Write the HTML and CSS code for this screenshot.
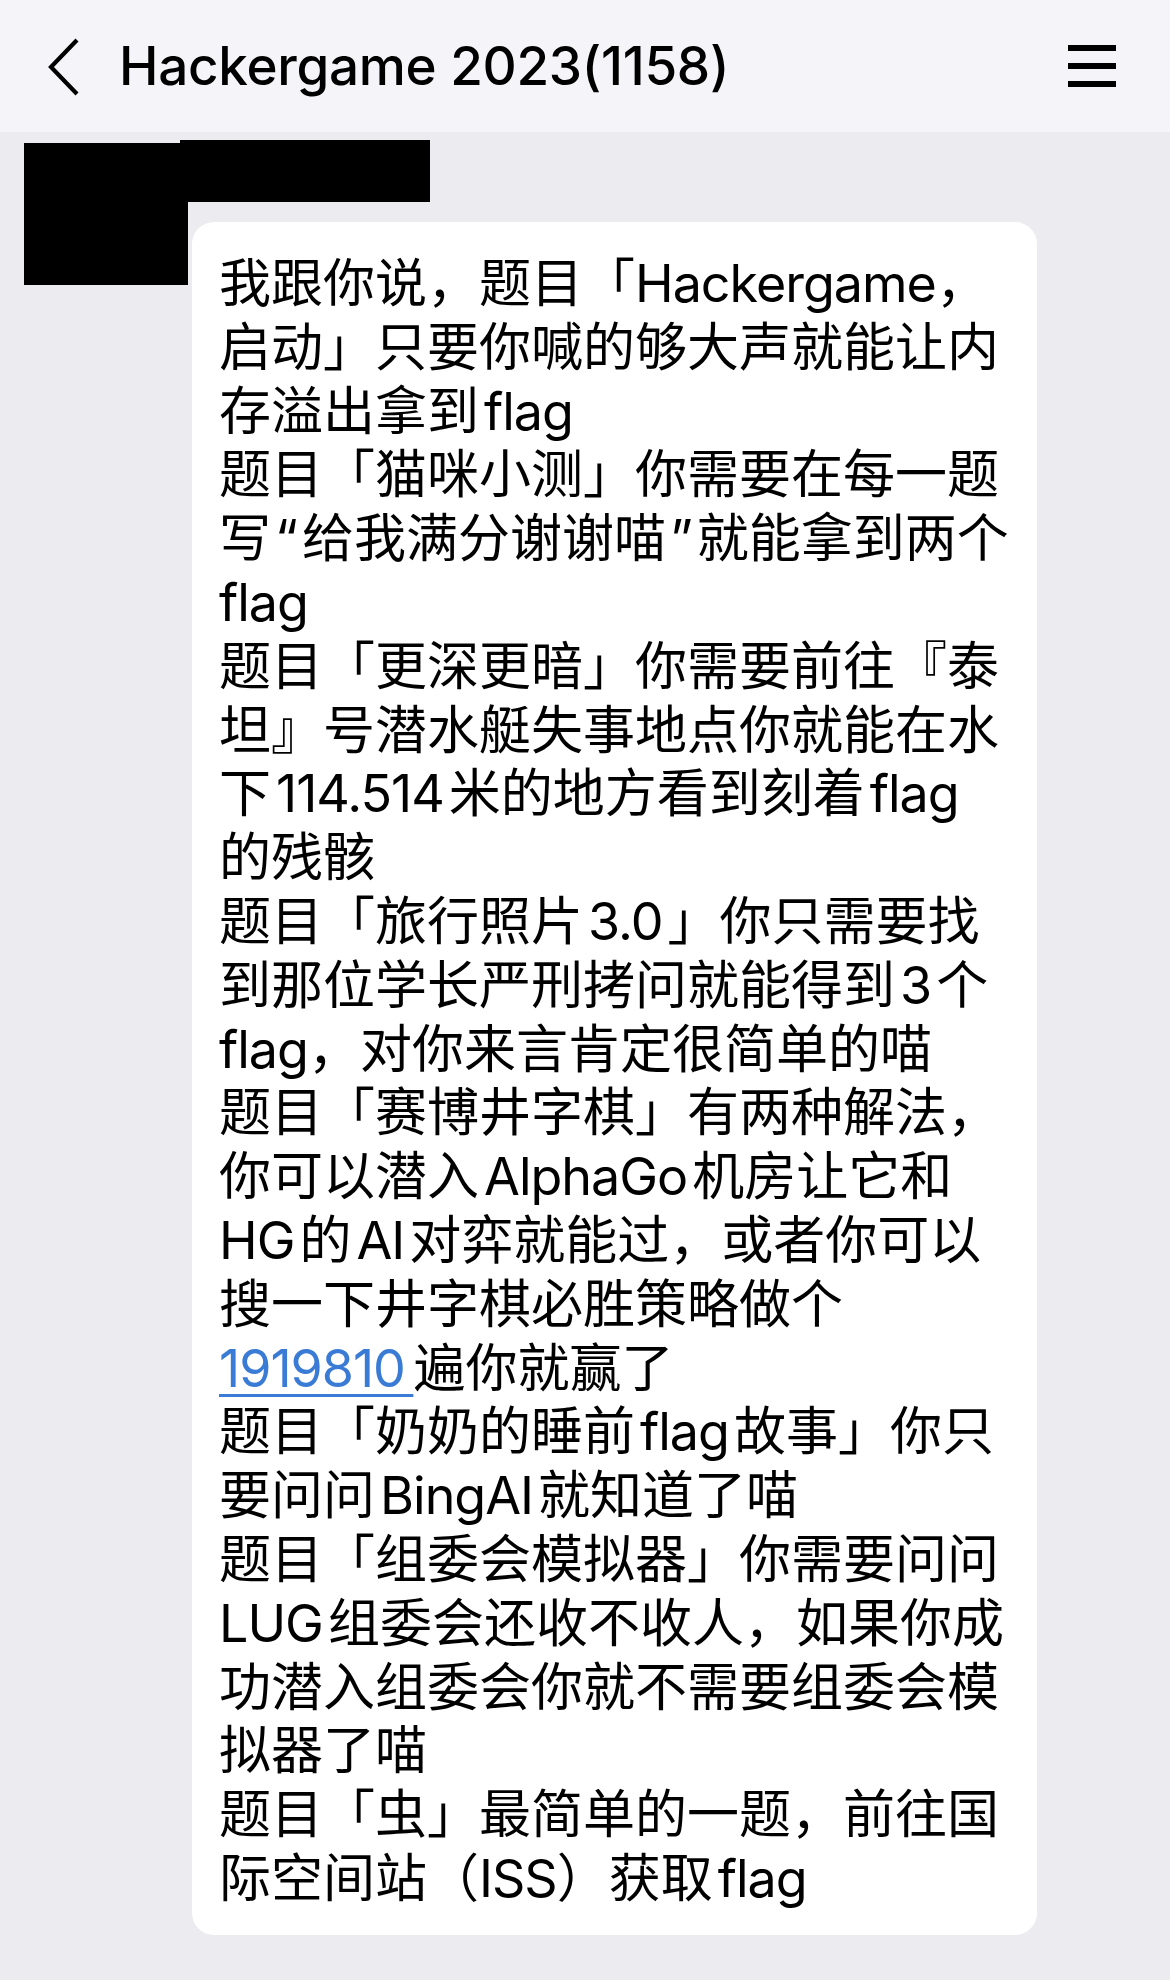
FILE: index.html
```html
<!DOCTYPE html>
<html lang="zh-CN">
<head>
<meta charset="utf-8">
<title>Hackergame 2023(1158)</title>
<link rel="stylesheet" href="styles.css">
</head>
<body>
<header class="header">
  <svg class="back" viewBox="0 0 32 58" width="32" height="58" aria-hidden="true">
    <polyline points="29,2 3,29 29,56" fill="none" stroke="#000" stroke-width="4.2" stroke-linecap="butt" stroke-linejoin="miter"/>
  </svg>
  <h1 class="title">Hackergame 2023(1158)</h1>
  <svg class="menu" viewBox="0 0 48 42" width="48" height="42" aria-hidden="true">
    <rect x="0" y="0" width="48" height="6" fill="#000"/>
    <rect x="0" y="18" width="48" height="6" fill="#000"/>
    <rect x="0" y="36" width="48" height="6" fill="#000"/>
  </svg>
</header>
<main class="chat">
  <div class="msg">
    <div class="avatar"></div>
    <div class="body">
      <div class="name"></div>
      <div class="bubble">
        <p class="text">我跟你说，题目「<span class="en">Hackergame</span>，<br>启动」只要你喊的够大声就能让内<br>存溢出拿到<span class="en g">flag</span><br>题目「猫咪小测」你需要在每一题<br>写<span class="q">“</span>给我满分谢谢喵<span class="q">”</span>就能拿到两个<br><span class="en">flag</span><br>题目「更深更暗」你需要前往『泰<br>坦』号潜水艇失事地点你就能在水<br>下<span class="en g">114.514</span>米的地方看到刻着<span class="en g">flag</span><br>的残骸<br>题目「旅行照片<span class="en g">3.0</span>」你只需要找<br>到那位学长严刑拷问就能得到<span class="en g">3</span>个<br><span class="en">flag</span>，对你来言肯定很简单的喵<br>题目「赛博井字棋」有两种解法，<br>你可以潜入<span class="en g">AlphaGo</span>机房让它和<br><span class="en g s">HG</span>的<span class="en g">AI</span>对弈就能过，或者你可以<br>搜一下井字棋必胜策略做个<br><a class="link en" href="#">1919810&thinsp;</a>遍你就赢了<br>题目「奶奶的睡前<span class="en g">flag</span>故事」你只<br>要问问<span class="en g">BingAI</span>就知道了喵<br>题目「组委会模拟器」你需要问问<br><span class="en g s">LUG</span>组委会还收不收人，如果你成<br>功潜入组委会你就不需要组委会模<br>拟器了喵<br>题目「虫」最简单的一题，前往国<br>际空间站（<span class="en">ISS</span>）获取<span class="en g">flag</span></p>
      </div>
    </div>
  </div>
</main>
</body>
</html>
```

FILE: styles.css
```css
html, body {
  margin: 0;
  padding: 0;
}
body {
  background: #ececf0;
  min-height: 1980px;
  font-family: "Inter", "Noto Sans CJK SC", sans-serif;
  color: #000;
}
.header {
  height: 132px;
  background: #f5f5f9;
  display: flex;
  align-items: center;
  padding: 0 54px 0 48px;
  box-sizing: border-box;
}
.back {
  flex: none;
  margin-right: 39px;
  margin-top: 2px;
}
.title {
  flex: 1;
  margin: 0;
  font-size: 53px;
  font-weight: 500;
  letter-spacing: -0.3px;
  line-height: 1;
  white-space: nowrap;
}
.menu {
  flex: none;
}
.chat {
  padding-top: 11px;
}
.msg {
  display: flex;
  padding-left: 24px;
}
.avatar {
  flex: none;
  width: 164px;
  height: 142px;
  background: #000;
}
.body {
  display: flex;
  flex-direction: column;
  margin-left: -8px;
  margin-top: -3px;
}
.name {
  width: 250px;
  height: 62px;
  background: #000;
}
.bubble {
  width: 845px;
  box-sizing: border-box;
  margin-top: 20px;
  margin-left: 12px;
  background: #fff;
  border-radius: 22px;
  padding: 30px 16px 24px 27px;
}
.text {
  margin: 0;
  font-size: 52px;
  line-height: 63.8px;
  white-space: nowrap;
}
.en {
  letter-spacing: -1px;
}
.g {
  margin: 0 5px;
}
.g.s {
  margin-left: 0;
}
.q {
  margin: 0 4px;
}
.link {
  color: #3a7bd5;
  text-decoration: underline;
  text-decoration-thickness: 3px;
  text-underline-offset: 7px;
}
```
